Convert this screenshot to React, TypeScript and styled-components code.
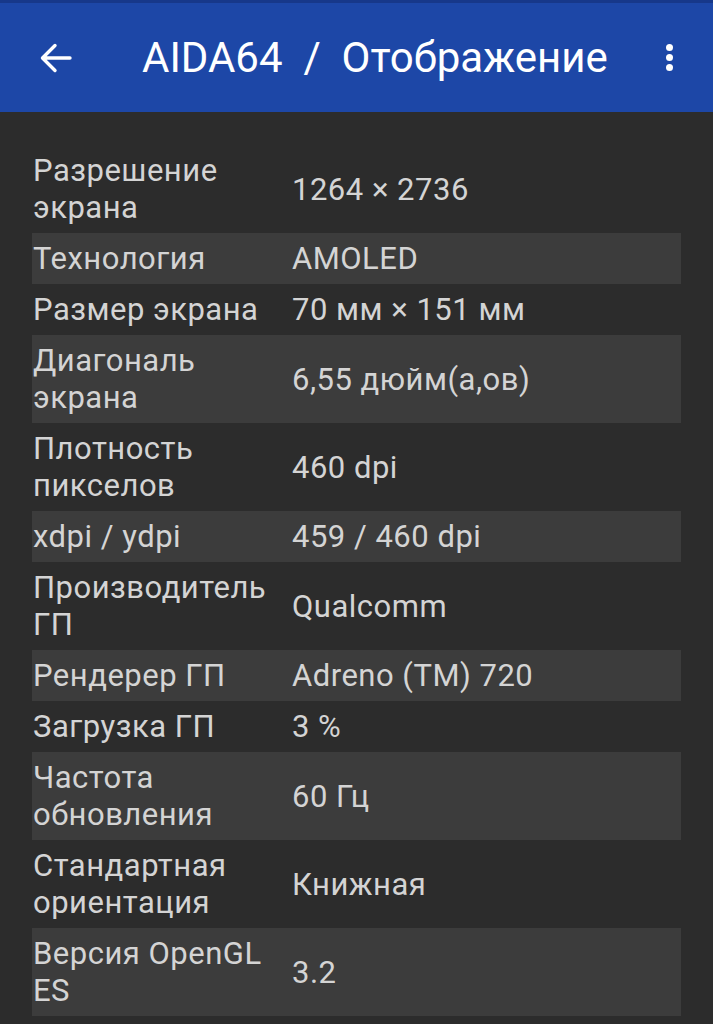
import React from "react";
import styled, { createGlobalStyle } from "styled-components";

const GlobalStyle = createGlobalStyle`
  html, body { margin: 0; padding: 0; background: #2c2c2c; }
  body { font-family: Roboto, "Noto Sans", sans-serif; }
`;

const Page = styled.div`
  width: 713px;
  min-height: 1024px;
  background: #2c2c2c;
`;

const StatusStrip = styled.div`
  height: 3px;
  background: #17388a;
`;

const AppBar = styled.header`
  height: 109px;
  background: #1d47a7;
  display: flex;
  align-items: center;
  padding: 0 0 0 40px;
  box-sizing: border-box;
`;

const IconButton = styled.div`
  width: 32px;
  height: 32px;
  display: flex;
  align-items: center;
  justify-content: center;
  flex: none;
`;

const Title = styled.h1`
  margin: 0 0 0 70px;
  flex: 1;
  color: #ffffff;
  font-family: Roboto, sans-serif;
  font-weight: 400;
  font-size: 42px;
  line-height: 50px;
  white-space: pre;
`;

const MenuButton = styled.div`
  width: 16px;
  height: 32px;
  margin-right: 36px;
  display: flex;
  flex-direction: column;
  align-items: center;
  justify-content: center;
  gap: 3px;
`;

const Dot = styled.span`
  width: 7px;
  height: 7px;
  border-radius: 50%;
  background: #ffffff;
`;

const List = styled.div`
  padding: 33px 32px 0;
  display: flex;
  flex-direction: column;
`;

const Row = styled.div<{ $shaded: boolean }>`
  display: grid;
  grid-template-columns: 260px 1fr;
  align-items: center;
  padding: 7px 0;
  background: ${(p) => (p.$shaded ? "#3c3c3c" : "transparent")};
  font-family: Roboto, sans-serif;
  font-size: 31px;
  letter-spacing: 0.5px;
  line-height: 37px;
  color: #d4d4d4;
`;

const Label = styled.div`
  padding-left: 1px;
  padding-right: 8px;
`;

const Value = styled.div``;

const rows: [string, string][] = [
  ["Разрешение экрана", "1264 × 2736"],
  ["Технология", "AMOLED"],
  ["Размер экрана", "70 мм × 151 мм"],
  ["Диагональ экрана", "6,55 дюйм(а,ов)"],
  ["Плотность пикселов", "460 dpi"],
  ["xdpi / ydpi", "459 / 460 dpi"],
  ["Производитель ГП", "Qualcomm"],
  ["Рендерер ГП", "Adreno (TM) 720"],
  ["Загрузка ГП", "3 %"],
  ["Частота обновления", "60 Гц"],
  ["Стандартная ориентация", "Книжная"],
  ["Версия OpenGL ES", "3.2"],
];

export default function App() {
  return (
    <Page>
      <GlobalStyle />
      <StatusStrip />
      <AppBar>
        <IconButton>
          <svg width="32" height="32" viewBox="0 0 32 32" fill="none">
            <path
              d="M30 16H3M15 3.5L2.5 16L15 28.5"
              stroke="#fff"
              strokeWidth="3.4"
              strokeLinecap="round"
              strokeLinejoin="round"
            />
          </svg>
        </IconButton>
        <Title>{"AIDA64  /  Отображение"}</Title>
        <MenuButton>
          <Dot />
          <Dot />
          <Dot />
        </MenuButton>
      </AppBar>
      <List>
        {rows.map(([l, v], i) => (
          <Row key={l} $shaded={i % 2 === 1}>
            <Label>{l}</Label>
            <Value>{v}</Value>
          </Row>
        ))}
      </List>
    </Page>
  );
}
